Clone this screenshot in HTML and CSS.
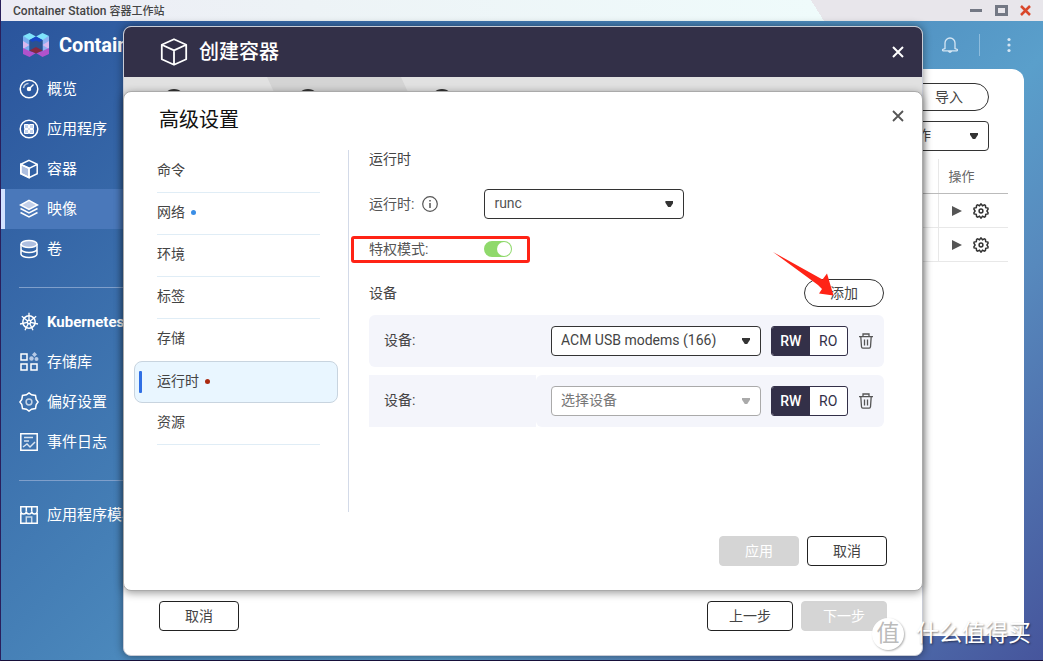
FILE: index.html
```html
<!DOCTYPE html>
<html lang="zh-CN">

<head>
  <meta charset="UTF-8">
  <meta name="viewport" content="width=device-width, initial-scale=1.0">
  <title>Container Station 容器工作站</title>
  <link rel="stylesheet" href="styles.css">
</head>

<body>
  <header class="titlebar">
    <div class="titlebar-text">Container Station <span>容器工作站</span></div>
    <div class="titlebar-buttons">
      <button aria-label="最小化"><svg width="13" height="13" viewBox="0 0 13 13"><path d="M0 5h12v3H0z" fill="#737884"/></svg></button>
      <button aria-label="最大化"><svg width="13" height="13" viewBox="0 0 13 13"><path d="M1.500 2.500h10v8h-10z" fill="none" stroke="#737884" stroke-width="3"/></svg></button>
      <button aria-label="关闭窗口"><svg width="13" height="13" viewBox="0 0 13 13"><path d="M1 2l9 9M10 2l-9 9" stroke="#d9472b" stroke-width="2.500"/></svg></button>
    </div>
  </header>

  <div class="app">
    <aside class="sidebar">
      <div class="brand">
        <svg width="26" height="24" viewBox="0 0 26 24">
          <path d="M0 3l6.500 3v12L0 20z" fill="#78aef0"/>
          <path d="M26 3l-6.500 3v12l6.500 2z" fill="#8fb0f2"/>
          <path d="M0 8l6.500 4L0 16zM26 8l-6.500 4L26 16z" fill="#d9b8ef"/>
          <path d="M0 15l6.500 3L13 20l-6.500 4L0 21zM26 15l-6.500 3L13 20l6.500 4 6.500-3z" fill="#b052cc"/>
          <path d="M6.500 7L13 8l6.500-1v11L13 15l-6.500 3z" fill="#2a5290"/>
          <path d="M0 3l6.500-3L13 3.500 6.500 7z" fill="#7fe3fb"/>
          <path d="M13 3.500L19.500 0 26 3l-6.500 4z" fill="#7fe3fb"/>
          <path d="M6.500 7L13 3.500 19.500 7l-3 2L13 7.500 9.500 9z" fill="#1747c8"/>
          <path d="M6.500 17.500L13 14l6.500 3.500L13 20.500z" fill="#86283f"/>
        </svg>
        <span>Container Station</span>
      </div>
      <nav class="nav">
        <a href="#">
          <svg width="20" height="20" viewBox="0 0 20 20"><circle cx="10" cy="10" r="8.800"/><path d="M4.500 9a5.500 5.500 0 0 1 5-4.500" opacity=".7"/><path d="M10 10l4.500-4.500"/><circle cx="10" cy="10" r="1.500" fill="#fff"/></svg>
          <span>概览</span>
        </a>
        <a href="#">
          <svg width="20" height="20" viewBox="0 0 20 20"><circle cx="10" cy="10" r="8.800"/><g fill="#c3d3ec" stroke="#fff" stroke-width="1"><path d="M5.500 5.500h4v4h-4zM10.500 5.500h4v4h-4zM5.500 10.500h4v4h-4zM10.500 10.500h4v4h-4z"/></g></svg>
          <span>应用程序</span>
        </a>
        <a href="#">
          <svg width="20" height="20" viewBox="0 0 20 20"><path d="M1.800 5.500L10 9v9.500l-8.200-4z" fill="#aebfe0"/><path d="M10 1.300l8.200 4v9.400l-8.200 4-8.200-4V5.300zM1.800 5.300L10 9.300l8.200-4M10 9.300v9.400"/></svg>
          <span>容器</span>
        </a>
        <a href="#" class="active">
          <svg width="20" height="20" viewBox="0 0 20 20"><path d="M10 1.300L18.500 6 10 10.500 1.500 6z" fill="#c3d0ea"/><path d="M1.500 9.500l8.500 4.500 8.500-4.500M1.500 13.500L10 18l8.500-4.500"/></svg>
          <span>映像</span>
        </a>
        <a href="#">
          <svg width="20" height="20" viewBox="0 0 20 20"><ellipse cx="10" cy="5" rx="8" ry="3.500" fill="#aebfe0"/><path d="M2 5v10c0 2 3.500 3.500 8 3.500s8-1.500 8-3.500V5M2 10c0 2 3.500 3.500 8 3.500s8-1.500 8-3.500"/></svg>
          <span>卷</span>
        </a>
        <hr>
        <a href="#" class="strong">
          <svg width="20" height="20" viewBox="0 0 20 20"><circle cx="10" cy="10" r="6.200"/><circle cx="10" cy="10" r="1.700"/><path d="M10 .8v7.500M2.800 4.200l5.900 4.700M17.200 4.200l-5.900 4.700M1 12l7.400-1.600M19 12l-7.400-1.600M6 18.300l3.300-6.800M14 18.300l-3.300-6.800" stroke-width="1.300"/></svg>
          Kubernetes
        </a>
        <a href="#">
          <svg width="20" height="20" viewBox="0 0 20 20"><path d="M2 2h6v6H2zM2 12h6v6H2zM12 12h6v6h-6z"/><g fill="#b7cae6" stroke="none"><path d="M15.500 0l2.500 2.500-2.500 2.500L13 2.500z"/><circle cx="17.500" cy="7" r="2"/><circle cx="12.500" cy="6.500" r="2.200"/></g></svg>
          <span>存储库</span>
        </a>
        <a href="#">
          <svg width="20" height="20" viewBox="0 0 20 20"><path d="M10 .9l2.600 1.900 3.900.7.700 3.900L19.100 10l-1.900 2.600-.7 3.900-3.900.7L10 19.100l-2.600-1.900-3.900-.7-.7-3.900L.9 10l1.900-2.600.7-3.900 3.900-.7z"/><circle cx="10" cy="10" r="2.900" opacity=".7"/></svg>
          <span>偏好设置</span>
        </a>
        <a href="#">
          <svg width="20" height="20" viewBox="0 0 20 20"><path d="M1.800 1.800h16.400v16.400H1.800z"/><path d="M5 5.500h9M5 9h5M4 15l4-3 3 3 5-5" opacity=".8"/></svg>
          <span>事件日志</span>
        </a>
        <hr>
        <a href="#">
          <svg width="20" height="20" viewBox="0 0 20 20"><path d="M1.800 8v10.200h16.400V8M1.800 1.800h16.400v4.500a2.700 2.700 0 0 1-5.400 0 2.700 2.700 0 0 1-5.500 0 2.700 2.700 0 0 1-5.500 0zM7.300 2v4M12.700 2v4"/><path d="M7.300 18v-6h5.400v6" opacity=".7"/></svg>
          <span>应用程序模板</span>
        </a>
      </nav>
    </aside>

    <main class="main">
      <div class="topbar">
        <button aria-label="通知"><svg width="18" height="18" viewBox="0 0 18 18" fill="none" stroke="#d5e6f4" stroke-width="1.300"><path d="M4 12.500V7a5 5 0 0 1 10 0v5.500l2.300 1c.3.800 0 1.300-.5 1.300H2.200c-.5 0-.8-.5-.5-1.300z"/><path d="M7.500 15c.3 1.700 2.700 1.700 3 0" fill="#d5e6f4"/></svg></button>
        <span class="topbar-line"></span>
        <button aria-label="更多"><svg width="18" height="18" viewBox="0 0 18 18" fill="#d5e6f4"><circle cx="9" cy="3.500" r="1.600"/><circle cx="9" cy="9" r="1.600"/><circle cx="9" cy="14.500" r="1.600"/></svg></button>
      </div>
      <div class="panel">
        <div class="toolbar">
          <button class="pill">导入</button>
          <div class="select-wrap">
            <select class="select" aria-label="操作"><option>操作</option></select>
          </div>
        </div>
        <table class="images">
          <thead>
            <tr>
              <th></th>
              <th class="action">操作</th>
            </tr>
          </thead>
          <tbody>
            <tr>
              <td></td>
              <td class="action">
                <button aria-label="运行"><svg width="16" height="16" viewBox="0 0 16 16"><path d="M3 3l10 5-10 5z" fill="#555"/></svg></button>
                <button aria-label="设置"><svg width="16" height="16" viewBox="0 0 16 16" fill="none" stroke="#333" stroke-width="1.500"><path d="M8 .9l1.500 1.900 2-.9.900.6.300 2.200 2.200.4.200 1-1.200 1.900 1.200 1.900-.2 1-2.200.4-.3 2.200-.9.600-2-.9L8 15.100l-1.500-1.900-2 .9-.9-.6-.3-2.200-2.200-.4-.2-1L2.100 8 .9 6.100l.2-1 2.200-.4.300-2.200.9-.6 2 .9z"/><circle cx="8" cy="8" r="1.900"/></svg></button>
              </td>
            </tr>
            <tr>
              <td></td>
              <td class="action">
                <button aria-label="运行"><svg width="16" height="16" viewBox="0 0 16 16"><path d="M3 3l10 5-10 5z" fill="#555"/></svg></button>
                <button aria-label="设置"><svg width="16" height="16" viewBox="0 0 16 16" fill="none" stroke="#333" stroke-width="1.500"><path d="M8 .9l1.500 1.900 2-.9.900.6.300 2.200 2.200.4.200 1-1.200 1.900 1.200 1.900-.2 1-2.200.4-.3 2.200-.9.600-2-.9L8 15.100l-1.500-1.900-2 .9-.9-.6-.3-2.200-2.200-.4-.2-1L2.100 8 .9 6.100l.2-1 2.200-.4.300-2.200.9-.6 2 .9z"/><circle cx="8" cy="8" r="1.900"/></svg></button>
              </td>
            </tr>
          </tbody>
        </table>
      </div>
    </main>
  </div>

  <!-- Create container wizard -->
  <section class="wizard" role="dialog" aria-label="创建容器">
    <header class="wizard-header">
      <svg width="28" height="28" viewBox="0 0 28 28" fill="none" stroke="#fff" stroke-width="1.800" stroke-linejoin="round"><path d="M14 1.200l12.200 5.600v14.400L14 26.800 1.800 21.200V6.800zM1.800 6.800L14 12.400l12.200-5.600M14 12.400v14.400"/></svg>
      <h2>创建容器</h2>
      <button class="close" aria-label="关闭"><svg width="12" height="12" viewBox="0 0 12 12"><path d="M1 1l10 10M11 1L1 11" stroke="#fff" stroke-width="2"/></svg></button>
    </header>
    <div class="steps">
      <div class="step"><i></i></div>
      <div class="step current"><i></i></div>
      <div class="step"><i></i></div>
    </div>
    <footer class="wizard-footer">
      <button class="btn">取消</button>
      <button class="btn wide">上一步</button>
      <button class="btn wide" disabled>下一步</button>
    </footer>
  </section>

  <!-- Advanced settings -->
  <section class="settings" role="dialog" aria-label="高级设置">
    <header class="settings-header">
      <h2>高级设置</h2>
      <button class="close" aria-label="关闭"><svg width="12" height="12" viewBox="0 0 12 12"><path d="M1 1l10 10M11 1L1 11" stroke="#555" stroke-width="1.800"/></svg></button>
    </header>
    <div class="settings-body">
      <nav class="tabs">
        <a href="#">命令</a>
        <a href="#">网络<i class="dot"></i></a>
        <a href="#">环境</a>
        <a href="#">标签</a>
        <a href="#">存储</a>
        <a href="#" class="active">运行时<i class="dot red"></i></a>
        <a href="#">资源</a>
      </nav>
      <div class="content">
        <h3>运行时</h3>
        <div class="field">
          <label for="runtime">运行时:</label>
          <svg class="info" width="16" height="16" viewBox="0 0 16 16" fill="none" stroke="#555" stroke-width="1.200"><circle cx="8" cy="8" r="7.300"/><path d="M8 7v5M8 4v1.500" stroke-width="1.500"/></svg>
          <div class="select-wrap">
            <select class="select" id="runtime"><option>runc</option></select>
          </div>
        </div>
        <div class="field privileged">
          <label for="privileged">特权模式:</label>
          <input class="switch" type="checkbox" id="privileged" checked>
        </div>
        <div class="device-heading">
          <h3>设备</h3>
          <button class="pill">添加</button>
          <svg class="arrow" width="62" height="46" viewBox="0 0 62 46"><path d="M0 0L49.500 27.500l4.500-6 6.500 22-14.500-2 3-4.500-4-4z" fill="#ff2316"/></svg>
        </div>
        <div class="device">
          <label for="device1">设备:</label>
          <div class="device-controls">
            <div class="select-wrap">
              <select class="select" id="device1"><option>ACM USB modems (166)</option></select>
            </div>
            <div class="mode"><button class="on">RW</button><button>RO</button></div>
            <button class="trash" aria-label="删除"><svg width="16" height="16" viewBox="0 0 16 16" fill="none" stroke="#555" stroke-width="1.300"><path d="M1 3.600h14M5 3.500V1h6v2.500M2.800 3.800l.7 10c.1 1 .5 1.400 1.300 1.400h6.400c.8 0 1.200-.4 1.300-1.400l.7-10M6.500 6.500v6M9.500 6.500v6"/></svg></button>
          </div>
        </div>
        <div class="device split">
          <label for="device2">设备:</label>
          <div class="device-controls">
            <div class="select-wrap empty">
              <select class="select" id="device2"><option>选择设备</option></select>
            </div>
            <div class="mode"><button class="on">RW</button><button>RO</button></div>
            <button class="trash" aria-label="删除"><svg width="16" height="16" viewBox="0 0 16 16" fill="none" stroke="#555" stroke-width="1.300"><path d="M1 3.600h14M5 3.500V1h6v2.500M2.800 3.800l.7 10c.1 1 .5 1.400 1.300 1.400h6.400c.8 0 1.200-.4 1.300-1.400l.7-10M6.500 6.500v6M9.500 6.500v6"/></svg></button>
          </div>
        </div>
      </div>
    </div>
    <footer class="settings-footer">
      <button class="btn" disabled>应用</button>
      <button class="btn">取消</button>
    </footer>
  </section>

  <div class="watermark"><span class="watermark-logo">值</span>什么值得买</div>
</body>

</html>
```
FILE: styles.css
```css
*,
*::before,
*::after {
  box-sizing: border-box;
}

body {
  position: relative;
  display: flex;
  flex-direction: column;
  min-height: 100vh;
  margin: 0;
  border-left: 1px solid #2a1f5c;
  border-bottom: 1px solid #17103a;
  font-family: Roboto, "Noto Sans CJK SC", sans-serif;
  font-size: 14px;
  color: #444;
  overflow: hidden;
}

button,
select,
input {
  font: inherit;
  color: inherit;
  margin: 0;
}

button {
  display: flex;
  align-items: center;
  justify-content: center;
  padding: 0;
  border: 0;
  background: none;
}

h2,
h3 {
  margin: 0;
  font-weight: 400;
}

a {
  color: inherit;
  text-decoration: none;
}

/* window title bar */
.titlebar {
  display: flex;
  align-items: center;
  justify-content: space-between;
  height: 21px;
  padding: 0 10px 2px 12px;
  background: linear-gradient(58deg, #ecebf5 0%, #edf3f6 30%, #effbfb 78%, #e8e6eb 78%);
  font-size: 12px;
  font-weight: 500;
}

.titlebar-text span {
  font-size: 11px;
}

.titlebar-buttons {
  display: flex;
  gap: 12px;
  padding-top: 2px;
}

.app {
  display: flex;
  flex: 1;
  background: linear-gradient(135deg, #2a549c 0%, #457fb6 37%, #5a9fcb 64%, #5789bd 76%, #46559c 100%);
}

/* sidebar */
.sidebar {
  width: 240px;
  color: #fff;
}

.brand {
  display: flex;
  align-items: center;
  gap: 10px;
  height: 48px;
  padding-left: 22px;
  font-size: 20px;
  font-weight: 700;
}

.nav a {
  display: flex;
  align-items: center;
  gap: 8px;
  height: 40px;
  padding-left: 18px;
  font-size: 15px;
}

.nav span {
  padding-bottom: 4px;
}

.nav svg {
  fill: none;
  stroke: #fff;
  stroke-width: 1.5;
}

.nav a.active {
  padding-left: 14px;
  border-left: 4px solid #d3e2ff;
  background: #4a78ba;
}

.nav a.strong {
  font-weight: 700;
}

.nav hr {
  margin: 18px 0 14px 18px;
  border: 0;
  border-top: 1px solid #7f9fcb;
}

/* image list behind the dialogs */
.main {
  display: flex;
  flex: 1;
  flex-direction: column;
  padding: 0 19px 24px 0;
}

.topbar {
  display: flex;
  align-items: center;
  justify-content: flex-end;
  gap: 20px;
  height: 48px;
  padding-right: 6px;
}

.topbar-line {
  width: 1px;
  height: 22px;
  background: #8dbcdd;
}

.panel {
  flex: 1;
  padding: 14px 16px;
  border-radius: 0 12px 0 0;
  background: #fff;
}

.toolbar {
  display: flex;
  flex-direction: column;
  align-items: flex-end;
  gap: 10px;
  padding-right: 19px;
}

.toolbar .select-wrap {
  width: 96px;
}

.images {
  width: 100%;
  margin-top: 8px;
  border-collapse: collapse;
}

.images th,
.images td {
  height: 34px;
  padding: 0;
  border-bottom: 1px solid #e8e8e8;
}

.images th {
  border-bottom-color: #bbb;
  font-size: 13px;
  font-weight: 400;
  text-align: left;
  color: #666;
}

.images .action {
  width: 70px;
  border-left: 1px solid #e8e8e8;
}

.images th.action {
  padding-left: 10px;
}

.images td.action {
  padding-left: 10px;
}

.images button {
  display: inline-flex;
  margin-right: 5px;
  vertical-align: middle;
}

/* shared controls */
.pill {
  width: 80px;
  height: 28px;
  padding-bottom: 2px;
  border: 1px solid #333;
  border-radius: 14px;
  background: #fff;
}

.btn {
  width: 80px;
  height: 30px;
  padding-bottom: 2px;
  border: 1px solid #222;
  border-radius: 4px;
  background: #fff;
}

.btn.wide {
  width: 86px;
}

.btn:disabled {
  border-color: #d5d5d5;
  background: #d5d5d5;
  color: #fff;
}

.select-wrap {
  position: relative;
}

.select-wrap::after {
  content: "";
  position: absolute;
  top: 12px;
  right: 11px;
  width: 8px;
  height: 6px;
  background: #333;
  clip-path: polygon(0 0, 100% 0, 100% 30%, 65% 100%, 35% 100%, 0 30%);
  pointer-events: none;
}

.select {
  display: block;
  width: 100%;
  height: 30px;
  padding: 0 9px 2px;
  border: 1px solid #333;
  border-radius: 4px;
  background: #fff;
  appearance: none;
}

.select-wrap.empty .select {
  border-color: #aaa;
  color: #777;
}

.select-wrap.empty::after {
  background: #aaa;
}

.close {
  width: 20px;
  height: 20px;
  margin-left: auto;
}

/* wizard dialog */
.wizard {
  position: absolute;
  top: 26px;
  right: 120px;
  bottom: 4px;
  left: 122px;
  display: flex;
  flex-direction: column;
  border: 1px solid #c9ccd6;
  border-radius: 8px;
  background: #fff;
  box-shadow: 0 0 8px rgba(0, 0, 0, 0.45);
  overflow: hidden;
}

.wizard-header {
  display: flex;
  align-items: center;
  gap: 11px;
  height: 50px;
  padding: 0 14px 0 36px;
  background: #333048;
  color: #fff;
}

.wizard-header h2 {
  padding-bottom: 3px;
  font-size: 20px;
  font-weight: 500;
}

.steps {
  display: flex;
  height: 52px;
  padding-left: 9px;
  background: #e1e1e1;
}

.step {
  width: 134px;
  padding: 12px 30px;
}

.step.current {
  width: 158px;
  margin-right: -24px;
  background: #d4d4d4;
  clip-path: polygon(0 0, 134px 0, 100% 100%, 24px 100%);
}

.step i {
  display: block;
  width: 22px;
  height: 22px;
  border: 2px solid #333;
  border-radius: 50%;
}

.wizard-footer {
  display: flex;
  gap: 8px;
  margin-top: auto;
  padding: 0 35px 24px;
}

.wizard-footer .btn:first-child {
  margin-right: auto;
}

/* advanced settings dialog */
.settings {
  position: absolute;
  top: 91px;
  right: 120px;
  bottom: 69px;
  left: 122px;
  display: flex;
  flex-direction: column;
  border: 1px solid #aaa;
  border-radius: 8px;
  background: #fff;
  box-shadow: 0 2px 8px rgba(0, 0, 0, 0.4);
}

.settings-header {
  display: flex;
  align-items: flex-start;
  padding: 14px 14px 16px 35px;
}

.settings-header h2 {
  font-size: 20px;
  line-height: 28px;
  color: #111;
}

.settings-body {
  display: flex;
  flex: 1;
}

.tabs {
  width: 204px;
  margin: 0 10px;
  padding-top: 1px;
}

.tabs a {
  display: flex;
  align-items: center;
  gap: 6px;
  height: 42px;
  margin: 0 18px 0 23px;
  padding-bottom: 6px;
  border-bottom: 1px solid #e0edf6;
}

.tabs a:nth-child(5) {
  border-bottom-color: #fff;
}

.tabs a.active {
  position: relative;
  margin: 0;
  padding: 0 22px 5px;
  border: 1px solid #c8d4df;
  border-radius: 8px;
  background: #e9f6ff;
}

.tabs a.active::before {
  content: "";
  position: absolute;
  top: 9px;
  left: 4px;
  width: 3px;
  height: 22px;
  border-radius: 1px;
  background: #2f6fe4;
}

.dot {
  width: 5px;
  height: 5px;
  margin-top: 4px;
  border-radius: 50%;
  background: #3a8ee6;
}

.dot.red {
  background: #ab2a10;
}

.content {
  flex: 1;
  padding: 0 38px 0 20px;
  border-left: 1px solid #d3dae8;
}

.content h3 {
  font-size: 14px;
  line-height: 18px;
}

.field {
  display: flex;
  align-items: center;
  height: 30px;
  margin-top: 21px;
  color: #555;
}

.field label {
  padding-bottom: 3px;
}

.field .info {
  margin-left: 8px;
}

.field .select-wrap {
  width: 200px;
  margin-left: 46px;
}

/* highlighted row */
.field.privileged {
  position: relative;
  height: 18px;
}

.field.privileged label {
  width: 115px;
}

.field.privileged::after {
  content: "";
  position: absolute;
  top: -4px;
  left: -18px;
  width: 179px;
  height: 27px;
  border: 3px solid #ff2316;
  border-radius: 3px;
  pointer-events: none;
}

.switch {
  display: flex;
  justify-content: flex-end;
  width: 28px;
  height: 16px;
  padding: 1px;
  border-radius: 8px;
  background: #8fd96b;
  appearance: none;
}

.switch::before {
  content: "";
  width: 14px;
  height: 14px;
  border-radius: 50%;
  background: #fff;
}

.device-heading {
  position: relative;
  display: flex;
  align-items: center;
  justify-content: space-between;
  margin-top: 21px;
}

.arrow {
  position: absolute;
  top: -27px;
  right: 49px;
}

.device {
  display: flex;
  margin-top: 8px;
  border-radius: 6px;
  background: #f4f5fb;
}

.device label {
  flex: 1;
  padding-left: 15px;
  line-height: 50px;
}

.device-controls {
  display: flex;
  align-items: center;
  gap: 10px;
  height: 52px;
  padding: 0 10px 0 15px;
}

.device-controls .select-wrap {
  width: 210px;
}

.device.split {
  background: none;
}

.device.split label,
.device.split .device-controls {
  background: #f4f5fb;
}

.device.split .device-controls {
  border-radius: 6px;
}

.mode {
  display: flex;
  width: 77px;
  height: 30px;
  border: 1px solid #333048;
  border-radius: 3px;
  background: #fff;
  overflow: hidden;
}

.mode button {
  flex: 1;
  padding-bottom: 1px;
  color: #333048;
}

.mode .on {
  background: #333048;
  color: #fff;
  font-weight: 500;
}

.settings-footer {
  display: flex;
  justify-content: flex-end;
  gap: 8px;
  padding: 24px 35px;
}

.watermark {
  position: absolute;
  right: 12px;
  bottom: 10px;
  display: flex;
  align-items: center;
  gap: 12px;
  font-size: 23px;
  line-height: 32px;
  color: #fff;
  text-shadow: 1px 1px 2px rgba(0, 0, 0, 0.5);
}

.watermark-logo {
  width: 32px;
  height: 32px;
  border-radius: 50%;
  background: #fff;
  box-shadow: 1px 1px 2px rgba(0, 0, 0, 0.3);
  color: #bbb;
  text-align: center;
  text-shadow: none;
}
```
